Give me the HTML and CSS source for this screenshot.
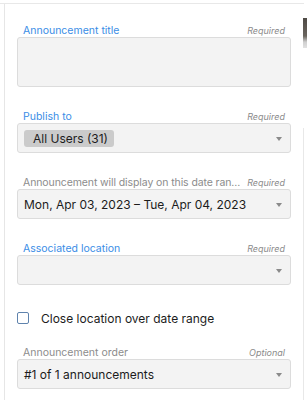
FILE: index.html
```
<!DOCTYPE html>
<html>
<head>
<meta charset="utf-8">
<link rel="stylesheet" href="styles.css">
</head>
<body>
<div class="topbar"></div>
<div class="layout">
  <div class="panel">
    <div class="field">
      <div class="label-row"><span class="label blue">Announcement title</span><span class="req">Required</span></div>
      <div class="box tall"></div>
    </div>
    <div class="field">
      <div class="label-row"><span class="label blue">Publish to</span><span class="req">Required</span></div>
      <div class="box select"><span class="chip">All Users (31)</span><span class="arrow"></span></div>
    </div>
    <div class="field">
      <div class="label-row"><span class="label gray narrow">Announcement will display on this date ran...</span><span class="req">Required</span></div>
      <div class="box select"><span class="value">Mon, Apr 03, 2023 – Tue, Apr 04, 2023</span><span class="arrow"></span></div>
    </div>
    <div class="field">
      <div class="label-row"><span class="label blue">Associated location</span><span class="req">Required</span></div>
      <div class="box select"><span class="value"></span><span class="arrow"></span></div>
    </div>
    <div class="check-row"><span class="checkbox"></span><span class="check-text">Close location over date range</span></div>
    <div class="field last">
      <div class="label-row"><span class="label gray">Announcement order</span><span class="req">Optional</span></div>
      <div class="box select"><span class="value">#1 of 1 announcements</span><span class="arrow"></span></div>
    </div>
  </div>
  <div class="side">
    <div class="thumb"></div>
    <div class="sideline"></div>
  </div>
</div>
</body>
</html>
```
FILE: styles.css
```
html, body {
  margin: 0;
  padding: 0;
  background: #fff;
}
body {
  width: 308px;
  height: 400px;
  overflow: hidden;
  font-family: Inter, "Noto Sans", sans-serif;
  color: #1f1f1f;
}
.topbar {
  height: 3px;
  width: 304px;
  border-bottom: 1px solid #e8e8e8;
}
.layout {
  display: flex;
  height: 396px;
}
.panel {
  margin-left: 4px;
  width: 299px;
  flex-shrink: 0;
  border-left: 1px solid #e6e6e6;
  padding: 19px 12px 0 12px;
  box-sizing: border-box;
}
.field {
  display: flex;
  flex-direction: column;
  margin-bottom: 22px;
}
.label-row {
  height: 14px;
  display: flex;
  align-items: center;
  justify-content: space-between;
  padding: 0 6px;
  white-space: nowrap;
}
.label {
  font-size: 10.5px;
  flex-shrink: 0;
}
.label.narrow {
  letter-spacing: -0.1px;
}
.blue { color: #3a8de6; }
.gray { color: #8c8c8c; }
.req {
  font-size: 9px;
  font-style: italic;
  color: #8a8a8a;
  margin-left: 3px;
  flex-shrink: 0;
}
.box {
  background: #f3f3f3;
  border: 1px solid #dcdcdc;
  border-radius: 3px;
  box-sizing: border-box;
  height: 30px;
}
.box.tall { height: 50px; }
.select {
  display: flex;
  align-items: center;
  justify-content: space-between;
  padding: 0 8px 0 6px;
}
.value {
  font-size: 12px;
  color: #1c1c1c;
}
.chip {
  background: #cbcbcb;
  border-radius: 3px;
  font-size: 12px;
  height: 17px;
  line-height: 17px;
  padding: 0 6px 0 9px;
  color: #1c1c1c;
}
.arrow {
  width: 0;
  height: 0;
  border-left: 3.5px solid transparent;
  border-right: 3.5px solid transparent;
  border-top: 4px solid #8a8a8a;
  margin-top: 1px;
}
.check-row {
  height: 22px;
  display: flex;
  align-items: center;
  margin-bottom: 16px;
}
.checkbox {
  width: 12px;
  height: 12px;
  box-sizing: border-box;
  border: 1.5px solid #5f83ad;
  border-radius: 2px;
  background: #fff;
}
.check-text {
  font-size: 12px;
  margin-left: 12px;
  color: #1c1c1c;
}
.side {
  width: 4px;
  display: flex;
  flex-direction: column;
}
.thumb {
  margin-top: 14px;
  height: 30px;
  background: linear-gradient(#4e4a45 0%, #6a655e 60%, #cfcfcf 80%, #e2e2e2 100%);
}
.sideline {
  margin-top: 80px;
  flex: 1;
  border-left: 1px solid #e8e8e8;
}
```
